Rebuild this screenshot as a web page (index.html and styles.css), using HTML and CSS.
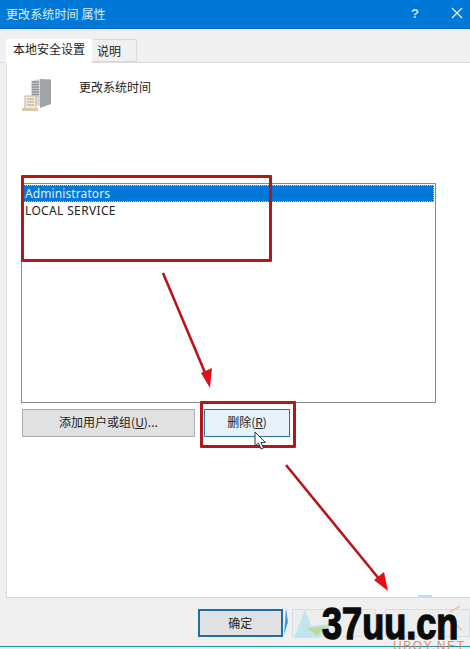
FILE: index.html
```html
<!DOCTYPE html>
<html lang="zh">
<head>
<meta charset="utf-8">
<title>更改系统时间 属性</title>
<link rel="stylesheet" href="styles.css">
</head>
<body>
<div class="window">
  <header class="titlebar">
    <span class="title">更改系统时间 属性</span>
    <span class="help">?</span>
    <svg class="close" width="12" height="12" viewBox="0 0 12 12"><path d="M1 1L11 11M11 1L1 11" stroke="#e4f2fb" stroke-width="1.2" fill="none"/></svg>
  </header>
  <nav class="tabs">
    <span class="tab active">本地安全设置</span>
    <span class="tab">说明</span>
  </nav>
  <main class="panel">
    <div class="policy">
      <svg class="policy-icon" width="34" height="34" viewBox="0 0 34 34">
        <path d="M10 3L19 1V28L10 26Z" fill="#d6d9db"/>
        <path d="M19 1L30 1.500V26L19 30Z" fill="#a0a5a8"/>
        <path d="M11 4H18M11 6.500H18M11 9H18M11 11.500H18M11 14H18M11 16.500H18" stroke="#8a8f93" stroke-width="1.300"/>
        <path d="M4 18H15V31H4Z" fill="#f3ecdc" stroke="#c4b596"/>
        <path d="M6 21H13M6 24H13M6 27H13" stroke="#a9a08c"/>
        <path d="M1 30H17V33H1Z" fill="#d8c9a8"/>
      </svg>
      <span class="policy-name">更改系统时间</span>
    </div>
    <div class="listbox">
      <div class="item selected">Administrators</div>
      <div class="item caps">LOCAL SERVICE</div>
    </div>
    <div class="actions">
      <button class="btn add">添加用户或组(<u>U</u>)...</button>
      <button class="btn remove">删除(<u>R</u>)</button>
    </div>
  </main>
  <footer class="footer">
    <button class="btn ok">确定</button>
    <div class="ghost cancel"></div>
    <div class="ghost apply"></div>
  </footer>
  <div class="bottom-edge"></div>

  <div class="mark mark-list"></div>
  <div class="mark mark-remove"></div>
  <svg class="arrows" width="470" height="649" viewBox="0 0 470 649">
    <path d="M163 273L206 375" stroke="#b5161c" stroke-width="2.600" fill="none"/>
    <path d="M210 388L201 373L212 368Z" fill="#e0101a"/>
    <path d="M286 465L380 580" stroke="#b5161c" stroke-width="2.600" fill="none"/>
    <path d="M388 591L374 580L384 572Z" fill="#e0101a"/>
    <path d="M286 608L284 635L288 622Z" fill="#3f9fd8"/>
    <path d="M418 596H432" stroke="#bfe0ee" stroke-width="2" fill="none"/>
    <path d="M450 612L460 606M452 622L462 630" stroke="#efc9a8" stroke-width="2" fill="none"/>
  </svg>
  <svg class="cursor" width="13" height="20" viewBox="0 0 13 20"><path d="M1 1V15L4.500 12L7 18L9.500 17L7 11.500H11.500Z" fill="#fff" stroke="#333" stroke-width="1"/></svg>
  <svg class="logo-shape" width="42" height="34" viewBox="0 0 42 34">
    <path d="M1 32L12 3L18 20L38 18L26 32Z" fill="#bfe6ee"/>
    <path d="M14 22L34 20L24 30Z" fill="#bcd9a4"/>
  </svg>
  <span class="brand-sub">UBOY.NET</span>
  <span class="brand">37uu.cn</span>
</div>
</body>
</html>
```
FILE: styles.css
```css
* { box-sizing: border-box; }
html, body { margin: 0; padding: 0; }
body { font-family: "Noto Sans CJK SC", "Liberation Sans", sans-serif; font-size: 12px; color: #222; }
.window { position: relative; width: 470px; height: 649px; overflow: hidden; background: #f0f0f0; display: flex; flex-direction: column; }
.titlebar { height: 29px; flex: none; background: #0078d7; color: #d9eefa; display: flex; align-items: center; padding: 0 5px 2px 6px; border-bottom: 1px solid #0a6cb8; }
.title { flex: 1; font-size: 12px; letter-spacing: .1px; }
.help { font: bold 13px "Liberation Sans", sans-serif; margin-right: 32px; color: #cfe8f6; }
.close { margin-right: 2px; }
.tabs { height: 34px; flex: none; display: flex; align-items: flex-end; padding-left: 6px; border-bottom: 1px solid #dcdcdc; }
.tab { height: 23px; padding: 3px 5px 0; border: 1px solid #d9d9d9; border-left: 0; background: #f0f0f0; line-height: 16px; width: 45px; white-space: nowrap; }
.tab.active { height: 24px; width: 86px; margin-bottom: -1px; background: #fff; border: 0; padding: 2px 0 0 7px; font-size: 12px; }
.panel { flex: 1; min-height: 0; margin-left: 6px; background: #fff; border-left: 1px solid #dcdcdc; border-bottom: 1px solid #dadada; padding: 10px 34px 0 14px; display: flex; flex-direction: column; }
.policy { height: 110px; flex: none; display: flex; align-items: flex-start; }
.policy-icon { width: 34px; height: 34px; margin-top: 5px; flex: none; }
.policy-name { margin: 5px 0 0 24px; line-height: 18px; }
.listbox { height: 220px; flex: none; border: 1px solid #8a8a8a; padding: 1px; background: #fff; font: 12px/17px "Noto Sans", "Liberation Sans", sans-serif; }
.item { height: 17px; padding-left: 2px; letter-spacing: .1px; }
.item.caps { letter-spacing: .35px; }
.item.selected { background: #0078d7; color: #dff1fb; outline: 1px dotted #a9cfe8; outline-offset: -1px; }
.actions { display: flex; margin-top: 6px; padding-left: 1px; gap: 9px; }
.btn { height: 28px; border: 1px solid #adadad; background: #e1e1e1; color: #222; font: 12px/24px "Noto Sans CJK SC", sans-serif; padding: 0 0 3px; }
.add { width: 173px; }
.remove { width: 86px; background: #e5f1fb; border-color: #1f7a9c; }
.footer { height: 48px; flex: none; display: flex; padding: 11px 0 0 198px; gap: 9px; }
.ok { width: 87px; border: 2px solid #1c6ea8; background: #e1e1e1; }
.ghost { height: 28px; border: 1px solid #d6dde0; background: #eceeee; }
.cancel { width: 87px; }
.apply { width: 87px; }
.bottom-edge { height: 3px; flex: none; background: #e3f0f7; border-top: 1px solid #2c89a8; }
.mark { position: absolute; border: 3px solid #b5161c; border-radius: 1px; }
.mark-list { left: 21px; top: 175px; width: 251px; height: 87px; }
.mark-remove { left: 200px; top: 401px; width: 96px; height: 47px; }
.arrows { position: absolute; left: 0; top: 0; pointer-events: none; }
.cursor { position: absolute; left: 254px; top: 431px; }
.logo-shape { position: absolute; left: 293px; top: 606px; }
.brand { position: absolute; left: 322px; top: 607px; font: bold 44px/33px "Liberation Sans", sans-serif; color: #0b0b0b; -webkit-text-stroke: 1.5px #0b0b0b; transform: scaleX(.82); transform-origin: left top; white-space: nowrap; }
.brand-sub { position: absolute; left: 393px; top: 640px; font: 12px/12px "Liberation Sans", sans-serif; color: #dd8f5e; letter-spacing: 1.6px; white-space: nowrap; }
```
